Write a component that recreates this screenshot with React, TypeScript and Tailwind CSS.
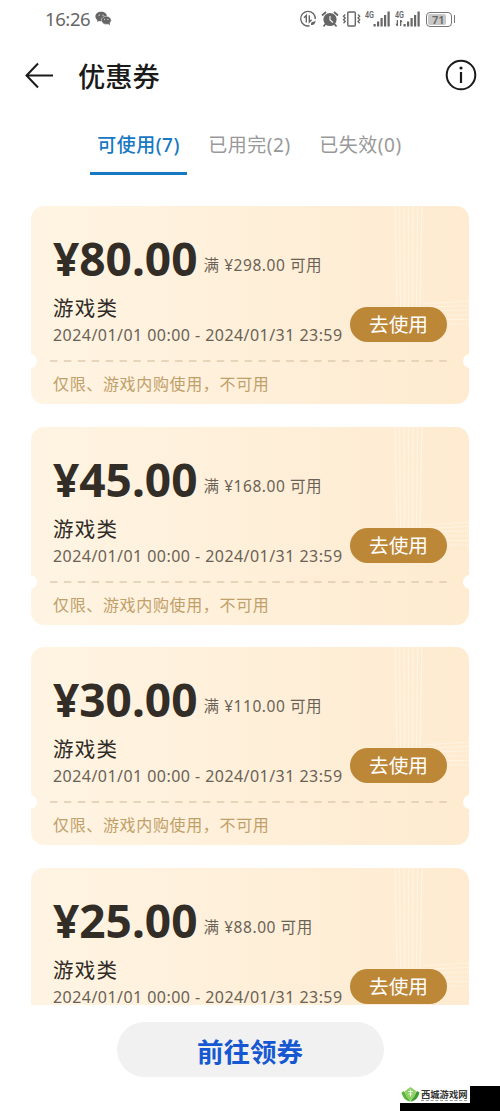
const coupons = [
  { amount: "80.00", min: "298.00" },
  { amount: "45.00", min: "168.00" },
  { amount: "30.00", min: "110.00" },
  { amount: "25.00", min: "88.00" },
];

const tabs = [
  { label: "可使用(7)", active: true },
  { label: "已用完(2)", active: false },
  { label: "已失效(0)", active: false },
];

function Signal({ data = false }: { data?: boolean }) {
  return (
    <svg width="26" height="18" viewBox="0 0 26 18" fill="#666" className="shrink-0">
      <text x="0" y="7.5" fontSize="8.5" fontWeight="600" fontFamily="Roboto, sans-serif" textLength="9" lengthAdjust="spacingAndGlyphs">
        4G
      </text>
      {data && <path d="M3 10v6H1.700L.5 13.800h1.200V10zM5 16v-6h1.300l1.200 2.200H6.300V16z" />}
      <rect x="8.5" y="14" width="2.200" height="2.500" />
      <rect x="12" y="11.500" width="2.200" height="5" />
      <rect x="15.500" y="8" width="2.200" height="8.500" />
      <rect x="19" y="5" width="2.200" height="11.500" />
      <rect x="22.500" y="1.500" width="2.200" height="15" />
    </svg>
  );
}

function StatusBar() {
  return (
    <div className="flex h-[38px] items-center pr-[45px] pl-[45px] text-[#666]">
      <span className="text-[18.5px] leading-[38px] tracking-[-0.4px]">16:26</span>
      <svg width="17" height="15" viewBox="0 0 17 15" className="-mt-px ml-[5px]">
        <path
          fill="#666"
          d="M6.2.8C2.8.8.4 2.9.4 5.5c0 1.5.8 2.8 2.1 3.7l-.6 1.8 2.1-1.1c.7.2 1.5.3 2.2.3C9.600 10.200 12 8.100 12 5.500 12 2.900 9.600.800 6.200.800z"
        />
        <ellipse cx="11.300" cy="9.300" rx="4.900" ry="4.100" fill="#666" stroke="#fff" strokeWidth=".5" />
        <path fill="#666" d="M12.500 12.500l2.500 1.700-.400-2.500z" />
        <g fill="#fff" fillOpacity=".7">
          <circle cx="4.300" cy="4.200" r=".7" />
          <circle cx="8" cy="4.200" r=".7" />
          <circle cx="9.600" cy="8.400" r=".6" />
          <circle cx="12.900" cy="8.400" r=".6" />
        </g>
      </svg>
      <div className="ml-auto flex items-center">
        <svg width="18" height="18" viewBox="0 0 18 18" fill="none" stroke="#666" strokeWidth="1.400">
          <path d="M10.500 15.800A7.300 7.300 0 1 1 16.300 9" />
          <path d="M7.300 12.500V5.500L5 7.800M10.300 5.300v6.700l2.300-2.300" />
          <path d="M16.800 9.500c-.3 1.500-1 2-2.500 2.200-2 .2-2.500 1.300-2.300 3.200 2.800.5 4.500-1 4.800-5.400z" fill="#666" stroke="none" />
        </svg>
        <svg width="18" height="18" viewBox="0 0 18 18" className="ml-[4px]">
          <path d="M1 5.500L5 2M17 5.500L13 2M4.500 14L2.500 16.500M13.500 14l2 2.500" stroke="#666" strokeWidth="1.800" />
          <circle cx="9" cy="9.500" r="6.600" fill="#666" />
          <path d="M9 6V10l3 2.500" stroke="#fff" strokeWidth="1.100" fill="none" />
        </svg>
        <svg width="19" height="18" viewBox="0 0 19 18" fill="none" stroke="#666" className="ml-[3px]">
          <rect x="5.800" y="2" width="7.500" height="14" rx="1" strokeWidth="1.400" />
          <path d="M3.200 4.500L1.500 6.300 3.200 8 1.500 9.800l1.700 1.700-1.700 1.700M16 4.500l1.700 1.800L16 8l1.700 1.800L16 11.500l1.700 1.700" strokeWidth="1.300" />
        </svg>
        <span className="ml-[4px] flex">
          <Signal />
          <span className="ml-[4px]">
            <Signal data />
          </span>
        </span>
        <div className="ml-[5px] flex h-[15px] w-[26px] items-center rounded-[4px] border-[1.500px] border-[#777] p-px">
          <div className="h-full w-[18px] rounded-[2px] bg-[#c8c8c8] pl-[4px] text-[11px] leading-[11px] font-semibold">71</div>
        </div>
        <div className="ml-[2px] h-[8px] w-px bg-[#777]" />
      </div>
    </div>
  );
}

function CouponCard({ amount, min }: { amount: string; min: string }) {
  return (
    <div className="relative h-[198px] shrink-0 overflow-hidden rounded-[13px] bg-linear-to-r from-[#fff4e3] to-[#feebd0] pl-[22px]">
      {/* faint pinstripes crossing behind the button */}
      <svg className="absolute inset-0" width="438" height="198" fill="none" stroke="#fff6e8" strokeOpacity=".75" strokeWidth="1.200">
        <path d="M364 0L366 101M368.500 0L369.500 101M373 0L373.500 101M377.500 0L377.500 101M382 0L381.500 101M386.500 0L385.500 101M391 0L389 101" />
        <path d="M392 98L438 95M400 101L438 99.500M410 104.500L438 104M416 109H438M416 113.500H438M416 118H438" />
      </svg>
      <div className="relative flex h-[89px] items-baseline pt-[20px] text-[#322d27]">
        <span className="text-[46px] leading-[65px] font-bold">¥{amount}</span>
        <span className="relative -top-[5px] ml-[6px] text-[15.500px] tracking-[0.560px] text-[#6b6256]">满 ¥{min} 可用</span>
      </div>
      <p className="relative h-[26px] text-[20.500px] leading-[26px] tracking-[1.200px] text-[#2f2b26]">游戏类</p>
      <p className="relative h-[28px] text-[16px] leading-[28px] tracking-[0.450px] whitespace-nowrap text-[#6b6256]">
        2024/01/01 00:00 - 2024/01/31 23:59
      </p>
      <button className="absolute top-[101px] right-[22px] h-[35px] w-[97px] rounded-full bg-[#bd8738] text-center text-[19.700px] leading-[36px] text-white">
        去使用
      </button>
      <svg className="relative mt-[11px] -ml-[3px] block" width="398" height="2">
        <line x1="0" y1="1" x2="398" y2="1" stroke="#dfccae" strokeWidth="1.500" strokeDasharray="7.500 6.400" />
      </svg>
      <span className="absolute top-[148px] -left-[8px] size-[14px] rounded-full bg-white" />
      <span className="absolute top-[148px] -right-[8px] size-[14px] rounded-full bg-white" />
      <p className="relative mt-[9px] text-[16px] leading-[26px] tracking-[0.650px] text-[#c0a06a]">仅限、游戏内购使用，不可用</p>
    </div>
  );
}

function Watermark() {
  return (
    <div className="absolute right-0 bottom-0 h-[25px] w-[100px] bg-black">
      <div className="flex h-[17px] w-[70px] items-center bg-white">
        <svg width="19" height="17" viewBox="0 0 19 17" className="ml-px">
          <path d="M.5 6.500L3 5l6.500 10.500C5 15 2 12 .5 6.500z" fill="#5cb53c" />
          <path d="M18.500 6.500L16 5 9.500 15.500c4.500-.5 7.500-3.500 9-9z" fill="#3f9c35" />
          <path d="M4 5l5.500-4L15 5l-1 5-4.500 5L5 10z" fill="#8fd066" />
          <path d="M7 5.500h5M9.500 3.500v7M7.500 8h4" stroke="#e9f7dc" />
        </svg>
        <div className="ml-px">
          <p className="font-['Noto_Sans_CJK_SC',sans-serif] text-[9.300px] leading-[12px] font-bold whitespace-nowrap text-[#333]">
            西城游戏网
          </p>
          <div className="w-[46px] border-t border-dashed border-[#999]" />
        </div>
      </div>
    </div>
  );
}

export default function App() {
  return (
    <div className="relative flex h-[1111px] w-[500px] flex-col overflow-hidden bg-white font-['Noto_Sans','Noto_Sans_CJK_SC',sans-serif]">
      <StatusBar />
      <header className="flex h-[75px] items-center pr-[24px] pl-[25px]">
        <svg width="29" height="27" viewBox="0 0 29 27" fill="none" stroke="#1a1a1a" strokeWidth="2">
          <path d="M28 13.500H1.500M13 1.500L1.500 13.500L13 25.500" />
        </svg>
        <h1 className="mt-[2px] ml-[24px] text-[27.300px] leading-[40px] font-medium text-[#1a1a1a]">优惠券</h1>
        <svg width="32" height="32" viewBox="0 0 32 32" fill="none" stroke="#1a1a1a" className="-mt-px ml-auto -mr-px">
          <circle cx="16" cy="16" r="14.300" strokeWidth="2" />
          <path d="M16 13v11" strokeWidth="2.200" />
          <circle cx="16" cy="9" r="1.600" fill="#1a1a1a" stroke="none" />
        </svg>
      </header>
      <nav className="flex h-[62px] shrink-0 justify-center gap-[14px] pr-px">
        {tabs.map((tab) => (
          <div
            key={tab.label}
            className={
              tab.active
                ? "w-[97px] border-b-[3px] border-[#1878c2] text-center text-[19px] leading-[64px] font-medium tracking-[0.500px] text-[#1878c2]"
                : "w-[97px] text-center text-[19px] leading-[64px] tracking-[0.500px] text-[#999]"
            }
          >
            {tab.label}
          </div>
        ))}
      </nav>
      <main className="flex h-[830px] shrink-0 flex-col gap-[22.700px] overflow-hidden px-[31px] pt-[31px]">
        {coupons.map((coupon) => (
          <CouponCard key={coupon.amount} {...coupon} />
        ))}
      </main>
      <button className="mx-auto mt-[17px] h-[55px] w-[267px] rounded-full bg-[#f1f1f1] pt-[5px] text-[26.500px] leading-[50px] font-bold text-[#1658d2]">
        前往领券
      </button>
      <Watermark />
    </div>
  );
}
